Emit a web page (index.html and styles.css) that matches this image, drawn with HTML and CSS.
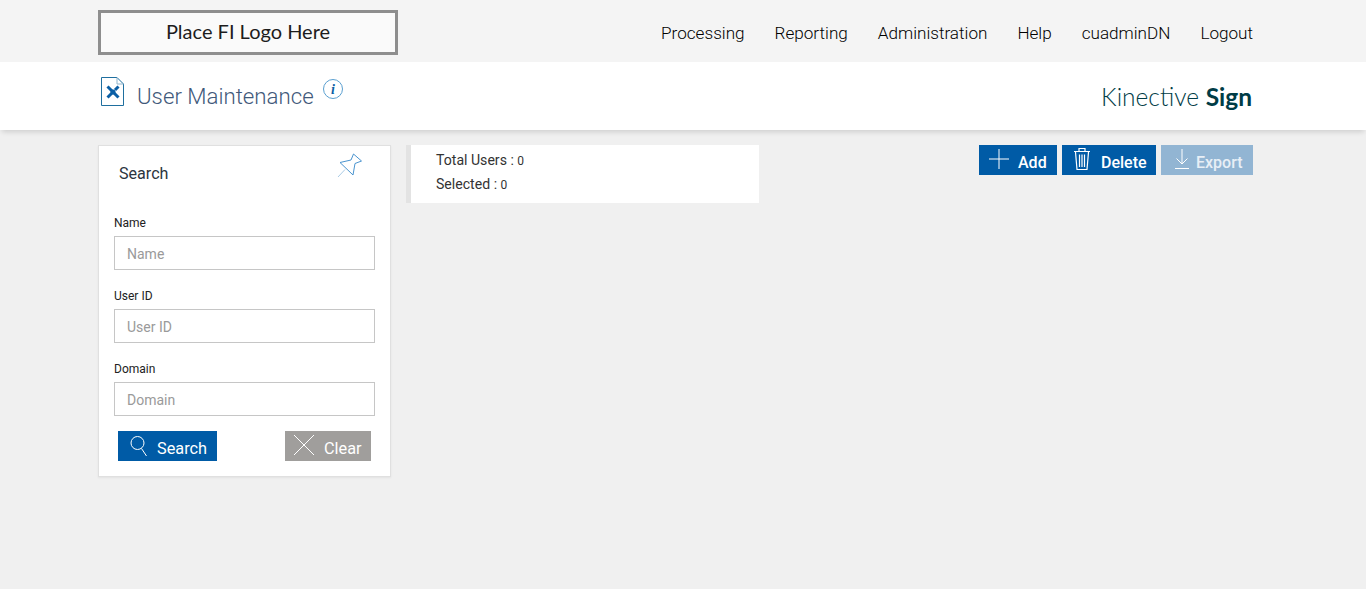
FILE: index.html
```html
<!DOCTYPE html>
<html lang="en">
<head>
<meta charset="utf-8">
<title>User Maintenance</title>
<link rel="stylesheet" href="styles.css">
</head>
<body>
<header class="topbar">
  <div class="wrap topbar-inner">
    <div class="logo">Place FI Logo Here</div>
    <nav class="nav">
      <a>Processing</a><a>Reporting</a><a>Administration</a><a>Help</a><a>cuadminDN</a><a>Logout</a>
    </nav>
  </div>
</header>
<section class="titlebar">
  <div class="wrap titlebar-inner">
    <svg class="page-icon" width="25" height="31" viewBox="0 0 25 31" fill="none">
      <path d="M1.500 1.500H17L23.500 8V29.500H1.500Z" fill="#fff" stroke="#1f6f9f"/>
      <path d="M17 1.500V8H23.500" stroke="#8fb4cc"/>
      <path d="M7.500 10.500L18.500 21.500" stroke="#0b5fa5" stroke-width="3"/>
      <path d="M18.500 10.500L15 14M12 17L7.500 21.500" stroke="#0b5fa5" stroke-width="3"/>
      <circle cx="13" cy="16" r="2.500" fill="#0b5fa5"/>
    </svg>
    <h1 class="page-title">User Maintenance</h1>
    <svg class="info-icon" width="22" height="22" viewBox="0 0 22 22" fill="none">
      <circle cx="11" cy="11" r="9.500" stroke="#5a9fd0"/>
      <text x="11" y="15.500" class="info-i">i</text>
    </svg>
    <div class="brand">Kinective <b>Sign</b></div>
  </div>
</section>
<main class="wrap content">
  <aside class="panel">
    <div class="panel-head">
      <h2 class="panel-title">Search</h2>
      <svg class="pin" width="28" height="28" viewBox="0 0 28 28" fill="none">
        <path d="M5 10.500L16 8L18.500 2L26.500 9L20 11.500L18 23Z" stroke="#4a94cf" stroke-linejoin="round"/>
        <path d="M10 17.500L3 25" stroke="#a9cbe6"/>
      </svg>
    </div>
    <div class="field">
      <label class="field-label">Name</label>
      <input class="field-input" placeholder="Name">
    </div>
    <div class="field">
      <label class="field-label">User ID</label>
      <input class="field-input" placeholder="User ID">
    </div>
    <div class="field">
      <label class="field-label">Domain</label>
      <input class="field-input" placeholder="Domain">
    </div>
    <div class="panel-actions">
      <button class="btn btn-search">
        <svg class="btn-icon" width="20" height="22" viewBox="0 0 20 22" fill="none" stroke="#fff"><circle cx="8.500" cy="8" r="6.500"/><path d="M12.500 13.500L17.500 21"/></svg>
        <span class="btn-text">Search</span>
      </button>
      <button class="btn btn-clear">
        <svg class="btn-icon" width="22" height="22" viewBox="0 0 22 22" fill="none" stroke="#fff"><path d="M1 1L21 21M21 1L1 21"/></svg>
        <span class="btn-text">Clear</span>
      </button>
    </div>
  </aside>
  <section class="stats">
    <div class="stat"><span>Total Users :</span> <small>0</small></div>
    <div class="stat"><span>Selected :</span> <small>0</small></div>
  </section>
  <div class="actions">
    <button class="btn btn-add">
      <svg class="btn-icon" width="22" height="22" viewBox="0 0 22 22" fill="none" stroke="#fff"><path d="M11 1V21M1 11H21"/></svg>
      <span class="btn-text">Add</span>
    </button>
    <button class="btn btn-delete">
      <svg class="btn-icon" width="18" height="24" viewBox="0 0 18 24" fill="none" stroke="#fff" stroke-width="1.200"><path d="M1 4.500H17M6 4V1.500H12V4"/><path d="M2.500 5L4 22.500H14L15.500 5"/><path d="M6.500 7.500V20M9 7.500V20M11.500 7.500V20"/></svg>
      <span class="btn-text">Delete</span>
    </button>
    <button class="btn btn-export">
      <svg class="btn-icon" width="16" height="22" viewBox="0 0 16 22" fill="none" stroke="#fff"><path d="M8 1V16M2.500 10.500L8 16L13.500 10.500M1 20.500H15"/></svg>
      <span class="btn-text">Export</span>
    </button>
  </div>
</main>
</body>
</html>
```

FILE: styles.css
```css
* { box-sizing: border-box; }
html, body { margin: 0; height: 100%; }
body { background: #f0f0f0; font-family: Roboto, "Liberation Sans", sans-serif; color: #222; overflow: hidden; }
.wrap { width: 1155px; margin-left: 98px; }

.topbar { height: 62px; background: #f4f4f4; }
.topbar-inner { display: flex; justify-content: space-between; padding-top: 10px; }
.logo { width: 300px; height: 45px; border: 3px solid #8e8e8e; background: #fafafa; display: flex; align-items: center; justify-content: center; font-family: Lato, sans-serif; font-size: 20px; color: #1d1d1d; padding-bottom: 3px; }
.nav { display: flex; gap: 30px; padding-top: 13px; font-size: 17.120px; font-weight: 300; line-height: 20px; color: #000; }

.titlebar { height: 68px; background: #fff; box-shadow: 0 4px 5px -2px rgba(0,0,0,.14); position: relative; }
.titlebar-inner { display: flex; align-items: flex-start; }
.page-icon { margin: 14px 0 0 2px; flex: none; }
.page-title { margin: 21px 0 0 12px; font-size: 22.240px; line-height: 27px; font-weight: 300; color: #41597a; }
.info-icon { margin: 16px 0 0 8px; flex: none; }
.info-i { font-family: "Liberation Serif", serif; font-style: italic; font-weight: 700; font-size: 14px; fill: #0b5fa5; text-anchor: middle; }
.brand { margin: 20px 1px 0 auto; font-family: Lato, sans-serif; font-weight: 300; font-size: 24.500px; line-height: 30px; color: #003c46; }
.brand b { font-weight: 700; }

.content { display: flex; align-items: flex-start; padding-top: 15px; }
.panel { width: 293px; height: 332px; background: #fff; border: 1px solid #e0e0e0; box-shadow: 0 1px 2px rgba(0,0,0,.06); padding: 0 15px; flex: none; }
.panel-head { height: 67px; display: flex; justify-content: space-between; padding: 6px 12px 0 5px; }
.panel-title { margin: 12px 0 0; font-size: 16.100px; line-height: 20px; font-weight: 400; color: #2c3440; }
.field { height: 73px; }
.field-label { display: block; font-size: 12px; line-height: 14px; height: 16px; color: #222; padding-top: 3px; box-sizing: content-box; }
.field-input { display: block; width: 261px; height: 34px; margin-top: 4px; border: 1px solid #c6c6c6; outline: 0; padding: 2px 12px 0; font: 400 14px Roboto, sans-serif; background: #fff; }
.field-input::placeholder { color: #9a9a9a; opacity: 1; }

.btn { height: 30px; border: 0; color: #fff; font: 400 16.300px Roboto, sans-serif; display: flex; align-items: center; padding: 0; }
.btn-icon { flex: none; }
.btn-text { padding-top: 4px; }
.panel-actions { display: flex; justify-content: space-between; padding: 0 4px; margin-top: -1px; }
.btn-search { width: 99px; background: #005ba6; gap: 8px; padding-left: 11px; }
.btn-clear { width: 86px; background: #a09e9c; gap: 9px; padding-left: 8px; }
.btn-clear .btn-icon { margin-top: -2px; }

.stats { width: 353px; height: 58px; margin-left: 15px; background: #fff; border-left: 5px solid #e3e3e3; padding: 3px 0 0 25px; font-size: 14.100px; color: #333; flex: none; }
.stat { height: 24px; line-height: 24px; }
.stat small { font-size: 12px; }

.actions { margin-left: auto; display: flex; gap: 5px; }
.actions .btn { font-size: 16px; font-weight: 500; }
.btn-add { width: 78px; background: #005ba6; padding-left: 9px; gap: 8px; }
.btn-add .btn-icon { margin-top: -2px; }
.btn-delete { width: 94px; background: #005ba6; padding-left: 11px; gap: 10px; }
.btn-delete .btn-icon { margin-top: -3px; }
.btn-export { width: 92px; background: #92b5d3; padding-left: 13px; gap: 6px; color: #e8eff6; }
.btn-export .btn-icon { margin-top: -2px; }
```
